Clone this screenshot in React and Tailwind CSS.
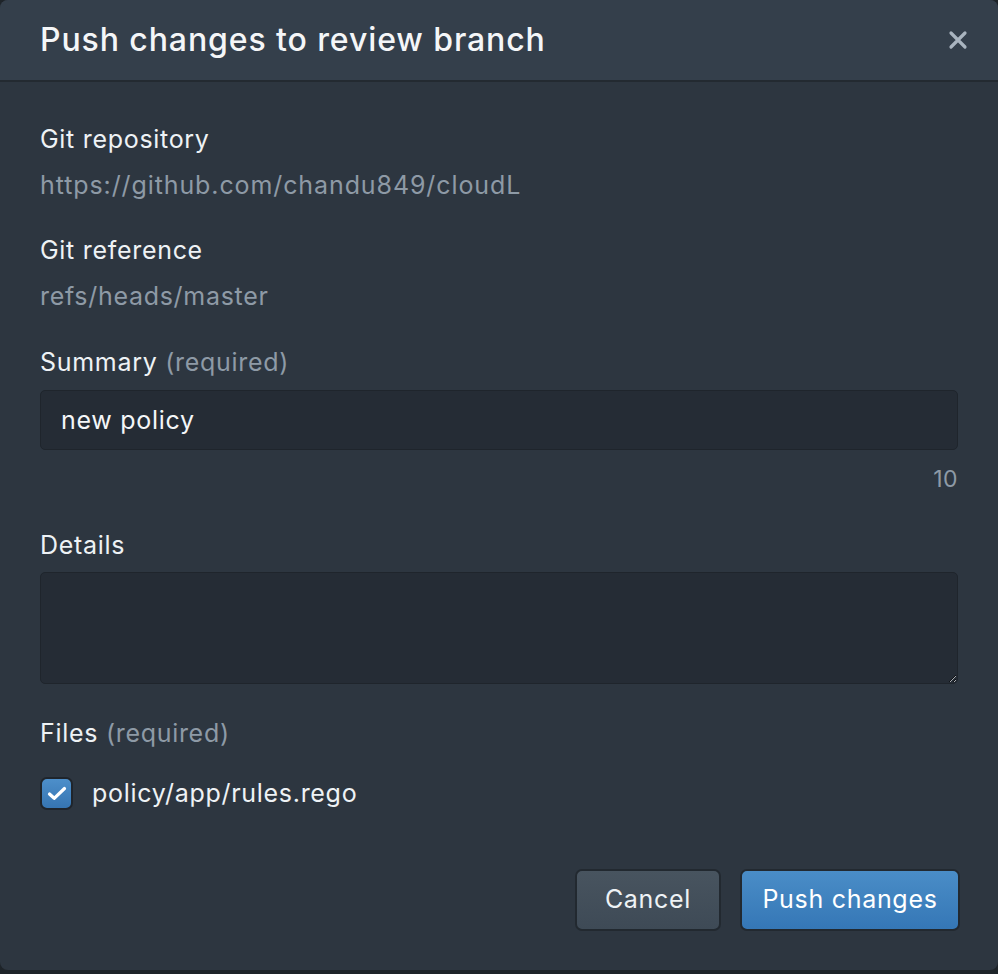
import React, { useState } from "react";

const font = { fontFamily: "Inter, 'Noto Sans', sans-serif" };

const Label = ({ children, hint }) => (
  <div className="text-[25px] leading-[34px] tracking-[0.7px] text-[#eef2f5]">
    {children}
    {hint && <span className="text-[#8e9aa6]"> {hint}</span>}
  </div>
);

const PushDialog = () => {
  const [summary, setSummary] = useState("new policy");
  const [details, setDetails] = useState("");
  const [checked, setChecked] = useState(true);

  return (
    <div className="flex h-[970px] w-[998px] flex-col overflow-hidden rounded-[8px] bg-[#2d3640]">
      {/* header */}
      <div className="flex h-[82px] shrink-0 items-center justify-between border-b-2 border-[#232a31] bg-[#343f4b] pl-[40px] pr-[30px]">
        <h2 className="text-[32px] font-medium leading-none tracking-[0.9px] text-[#f4f6f8]">
          Push changes to review branch
        </h2>
        <button className="flex h-[20px] w-[20px] items-center justify-center text-[#a9b4bf]">
          <svg width="20" height="20" viewBox="0 0 20 20" fill="none" stroke="currentColor" strokeWidth="3.2" strokeLinecap="round">
            <path d="M3 3 L17 17 M17 3 L3 17" />
          </svg>
        </button>
      </div>

      {/* body */}
      <div className="flex flex-1 flex-col px-[40px] pt-[40px]">
        <Label>Git repository</Label>
        <div className="mt-[12px] text-[25px] leading-[34px] tracking-[0.9px] text-[#8e9aa6]">
          https://github.com/chandu849/cloudL
        </div>

        <div className="mt-[31px]">
          <Label>Git reference</Label>
        </div>
        <div className="mt-[12px] text-[25px] leading-[34px] tracking-[0.7px] text-[#8e9aa6]">refs/heads/master</div>

        <div className="mt-[32px]">
          <Label hint="(required)">Summary</Label>
        </div>
        <input
          value={summary}
          onChange={(e) => setSummary(e.target.value)}
          className="mt-[11px] h-[60px] w-full rounded-[5px] border border-[#1f252c] bg-[#252c35] px-[20px] text-[25px] tracking-[0.7px] text-[#f4f6f8] outline-none"
        />
        <div className="mt-[12px] text-right text-[23px] leading-[34px] tracking-[0.5px] text-[#8e9aa6]">{summary.length}</div>

        <div className="mt-[32px]">
          <Label>Details</Label>
        </div>
        <textarea
          value={details}
          onChange={(e) => setDetails(e.target.value)}
          className="mt-[10px] h-[112px] w-full rounded-[5px] border border-[#1f252c] bg-[#252c35] px-[20px] py-[12px] text-[25px] text-[#f4f6f8] outline-none"
        />

        <div className="mt-[32px]">
          <Label hint="(required)">Files</Label>
        </div>
        <label className="mt-[26px] flex cursor-pointer items-center gap-[19px]">
          <button
            onClick={() => setChecked(!checked)}
            className={`flex h-[33px] w-[33px] items-center justify-center rounded-[7px] border-2 border-[#1f252c] ${
              checked ? "bg-gradient-to-b from-[#4d8fca] to-[#3675b2]" : "bg-[#252c35]"
            }`}
          >
            {checked && (
              <svg width="20" height="15" viewBox="0 0 20 15" fill="none" stroke="white" strokeWidth="3.2" strokeLinecap="round" strokeLinejoin="round">
                <path d="M2.5 8 L7.2 12.3 L17.5 2.5" />
              </svg>
            )}
          </button>
          <span className="text-[25px] leading-[34px] tracking-[0.7px] text-[#eef2f5]">policy/app/rules.rego</span>
        </label>

        <div className="mt-[59px] flex justify-end gap-[19px] pr-[-2px]">
          <button className="h-[62px] w-[146px] rounded-[7px] border-2 border-[#222930] bg-gradient-to-b from-[#48545f] to-[#3e4a56] text-[25px] tracking-[0.7px] text-[#eef2f5]">
            Cancel
          </button>
          <button className="-mr-[2px] h-[62px] w-[220px] rounded-[7px] border-2 border-[#222930] bg-gradient-to-b from-[#4a8dc7] to-[#3577b6] text-[25px] tracking-[0.7px] text-white">
            Push changes
          </button>
        </div>
      </div>
    </div>
  );
};

export default function App() {
  return (
    <div className="min-h-[974px] w-[998px] bg-[#1e2429]" style={font}>
      <PushDialog />
    </div>
  );
}
